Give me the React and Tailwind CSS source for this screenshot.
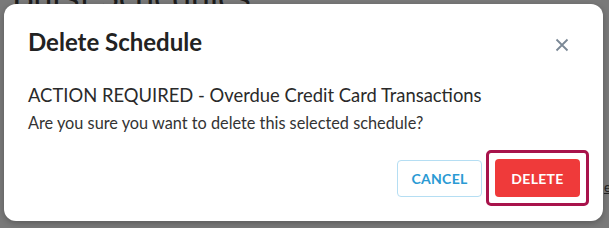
import React from 'react';

export default function App() {
  return (
    <div
      className="relative h-[228px] w-[609px] overflow-hidden bg-[#797979]"
      style={{ fontFamily: 'Lato, "Noto Sans", sans-serif' }}
    >
      {/* Page behind the overlay */}
      <div className="absolute left-[12px] top-[-21px] text-[34px] leading-none text-[#1d1d1d]">
        Burst Schedules
      </div>
      <div className="absolute right-[-8px] top-[178px] text-[13px] text-[#222] underline">ec</div>

      {/* Dialog */}
      <div className="absolute left-[4px] top-[4px] flex h-[217px] w-[599px] flex-col rounded-[12px] bg-white pl-6 pr-[24px] pt-[24px] shadow-[0_2px_6px_rgba(0,0,0,0.25)]">
        <div className="flex items-center justify-between">
          <h2 className="text-[24px] font-bold leading-[28px] text-[#222]">Delete Schedule</h2>
          <button className="mr-[10px] mt-[6px] text-[#7b8896]">
            <svg width="14" height="14" viewBox="0 0 14 14" fill="none" stroke="currentColor" strokeWidth="1.8">
              <path d="M1.5 1.5 L12.5 12.5 M12.5 1.5 L1.5 12.5" />
            </svg>
          </button>
        </div>

        <div className="mt-[27px] text-[18.4px] leading-[24px] text-[#2a2a2a]">
          ACTION REQUIRED - Overdue Credit Card Transactions
        </div>
        <div className="mt-[6px] text-[16.3px] leading-[20px] text-[#333]">
          Are you sure you want to delete this selected schedule?
        </div>

        <div className="mt-[17px] flex items-center justify-end gap-[4px]">
          <button className="h-[37px] w-[85px] rounded-[4px] border border-[#b5def3] bg-white text-[14px] font-bold tracking-[0.3px] text-[#2b9ad4]">
            CANCEL
          </button>
          <div className="mr-[-10px] rounded-[5px] border-[3px] border-[#a8134b] p-[6px]">
            <button className="block h-[38px] w-[85px] rounded-[4px] bg-[#ef3a3a] text-[14px] font-bold tracking-[0.3px] text-white">
              DELETE
            </button>
          </div>
        </div>
      </div>
    </div>
  );
}
